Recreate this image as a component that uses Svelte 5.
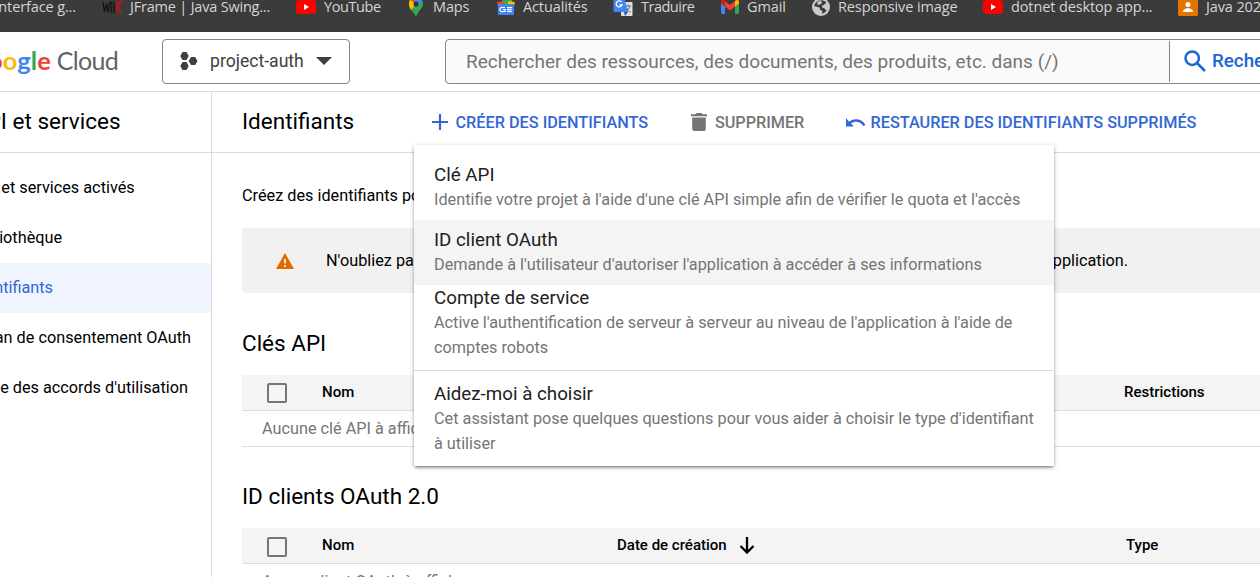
<script>
  const nav = [
    'API et services activés',
    'Bibliothèque',
    'Identifiants',
    'Écran de consentement OAuth',
    "Page des accords d'utilisation"
  ];
  const menu = [
    { title: 'Clé API', desc: ["Identifie votre projet à l'aide d'une clé API simple afin de vérifier le quota et l'accès"] },
    { title: 'ID client OAuth', desc: ["Demande à l'utilisateur d'autoriser l'application à accéder à ses informations"], kind: 'hover' },
    { title: 'Compte de service', desc: ["Active l'authentification de serveur à serveur au niveau de l'application à l'aide de", 'comptes robots'], kind: 'tight' },
    { title: 'Aidez-moi à choisir', desc: ["Cet assistant pose quelques questions pour vous aider à choisir le type d'identifiant", 'à utiliser'], kind: 'last' }
  ];
</script>

<div class="page">
  <nav class="bookmarks">
    <div class="bm b0"><span>Interface g...</span></div>
    <div class="bm b1">
      <svg width="20" height="16" viewBox="0 0 20 16"><path d="M.8 2.500 2.500 13 4.500 5 6.200 13 8 2.500M9.500 2.500v11M12 2.500v11h2" fill="none" stroke="#171717" stroke-width="1.500"/><path d="M14 2l5 12M19 1l-5 13" stroke="#c80f13" stroke-width="1.800"/></svg>
      <span>JFrame | Java Swing...</span>
    </div>
    <div class="bm b2">
      <svg width="20" height="16" viewBox="0 0 20 16"><rect y="1" width="20" height="14" rx="3.500" fill="#f00"/><path d="M8 5v6l5-3z" fill="#fff"/></svg>
      <span>YouTube</span>
    </div>
    <div class="bm b3">
      <svg width="14" height="20" viewBox="0 0 14 20"><path d="M7 0a7 7 0 0 1 7 7c0 4-4.500 6-7 13-1-4-7-8-7-13a7 7 0 0 1 7-7z" fill="#34a853"/><path d="M1.500 2.500 7 7l-5 6C.8 11 0 9 0 7c0-2 .6-3.500 1.500-4.500z" fill="#fbbc04"/><path d="M1.500 2.500A7 7 0 0 1 9 .3L4.500 5.500z" fill="#ea4335"/><path d="M9 .3a7 7 0 0 1 4.300 3.600L9 8 5 5z" fill="#4285f4"/><circle cx="7" cy="7" r="2.500" fill="#28344a"/></svg>
      <span>Maps</span>
    </div>
    <div class="bm b4">
      <svg width="18" height="18" viewBox="0 0 18 18"><path d="M5 0h10v9H5z" fill="#34a853"/><path d="M0 4 7 3v8L2 12z" fill="#ea4335"/><path d="m11 3 7 1-2 9-5-1z" fill="#fbbc04"/><rect x="1" y="6" width="16" height="11" rx="1" fill="#4285f4"/><path d="M8 9.500H6a2.200 2.200 0 1 0 0 4h2v-2H6M10 9.700h5M10 11.600h4.500M10 13.500h5" fill="none" stroke="#fff" stroke-width="1.200"/></svg>
      <span>Actualités</span>
    </div>
    <div class="bm b5">
      <svg width="20" height="20" viewBox="0 0 20 20"><rect x="8" y="5" width="11.500" height="14" rx="1" fill="#dce1e8"/><path d="M2 0h9l4 15H2a1.500 1.500 0 0 1-1.500-1.500V1z" fill="#4285f4"/><path d="m11 15 4 0-3 4z" fill="#2854b8"/><path d="M8.500 5A3 3 0 1 0 9 8H6.500" fill="none" stroke="#fff" stroke-width="1.300"/><path d="M12.500 9H18M15.200 7.500V9M17 9c-.7 3-2 4.500-4 5.500M13.500 11c1 2 2 3 4 4" fill="none" stroke="#687785" stroke-width="1.100"/></svg>
      <span>Traduire</span>
    </div>
    <div class="bm b6">
      <svg width="18" height="14" viewBox="0 0 18 14"><path d="M0 3h4v11H1.500A1.500 1.500 0 0 1 0 12.500z" fill="#4285f4"/><path d="M14 3h4v9.500a1.500 1.500 0 0 1-1.500 1.500H14z" fill="#34a853"/><path d="M0 2c0-2 2-2.500 3.500-1.300L9 5l5.500-4.300C16 0 18 0 18 2v1.500l-9 7-9-7z" fill="#ea4335"/><path d="M14 1c2-1.600 4-1 4 1v1.500l-4 3z" fill="#fbbc04"/><path d="M0 2c0-2 2-2.600 4-1v5.500l-4-3z" fill="#c5221f"/></svg>
      <span>Gmail</span>
    </div>
    <div class="bm b7">
      <svg width="18" height="18" viewBox="0 0 18 18"><circle cx="9" cy="9" r="9" fill="#c8cbce"/><path d="M9 2.200c2 0 4 .8 5.200 2.300L12.500 7 10 7.500V9.500L12 10l2.500 2.500c-1 1.700-2.500 2.800-4.500 3.200l.5-2.200L8 11.500 7.500 9.500 2.200 8C2.500 5 5 2.500 9 2.200z" fill="#3c3c3c"/><path d="M5 4.500 8 2.500l2 1.500-1 2-3 1zM12 6l3 1 .5 3-2-.5z" fill="#c8cbce"/></svg>
      <span>Responsive image</span>
    </div>
    <div class="bm b8">
      <svg width="20" height="16" viewBox="0 0 20 16"><rect y="1" width="20" height="14" rx="3.500" fill="#f00"/><path d="M8 5v6l5-3z" fill="#fff"/></svg>
      <span>dotnet desktop app...</span>
    </div>
    <div class="bm b9">
      <svg width="20" height="18" viewBox="0 0 20 18"><rect width="20" height="18" rx="1.500" fill="#e37400"/><circle cx="10" cy="6.500" r="2.500" fill="#fff"/><path d="M5 14c0-5 10-5 10 0z" fill="#fff"/></svg>
      <span>Java 2023</span>
    </div>
  </nav>

  <header class="top">
    <div class="logo"><span class="goog"><b class="blue">G</b><b class="red">o</b><b class="yellow">o</b><b class="blue">g</b><b class="green">l</b><b class="red">e</b></span><span class="cloud">Cloud</span></div>
    <div class="project">
      <svg width="18" height="20" viewBox="0 0 18 20" fill="#3c4043"><path d="M2.500 1h4L8.700 5 6.500 9h-4L.3 5zM2.500 11h4l2.200 4-2.200 4h-4L.3 15zM11 6h4.200l2.300 4-2.300 4H11l-2.300-4z"/></svg>
      <span>project-auth</span>
      <svg class="caret" width="16" height="8" viewBox="0 0 16 8"><path d="M0 0h16L8 8z" fill="#3c4043"/></svg>
    </div>
    <div class="search">
      <div class="field">Rechercher des ressources, des documents, des produits, etc. dans (/)</div>
      <div class="go">
        <svg width="22" height="22" viewBox="0 0 22 22" fill="none" stroke="#1967d2" stroke-width="2.500"><circle cx="8.200" cy="8.200" r="6.700"/><path d="m13 13 8 8"/></svg>
        <span>Recherche</span>
      </div>
    </div>
  </header>

  <div class="body">
    <aside>
      <div class="side-title">API et services</div>
      <div class="links">
        {#each nav as label, i}
          <div class="link" class:active={i === 2}>{label}</div>
        {/each}
      </div>
    </aside>

    <main>
      <div class="toolbar">
        <h1>Identifiants</h1>
        <div class="action create">
          <svg width="16" height="16" viewBox="0 0 16 16"><path d="M8 0v16M0 8h16" stroke="#3367d6" stroke-width="2.200"/></svg>
          <span>CRÉER DES IDENTIFIANTS</span>
        </div>
        <div class="action delete">
          <svg width="16" height="18" viewBox="0 0 16 18" fill="#757575"><path d="M0 1.200h4.500L5.300 0h5.400l.8 1.200H16v2H0zM1.200 4.500h13.600V16a2 2 0 0 1-2 2H3.200a2 2 0 0 1-2-2z"/></svg>
          <span>SUPPRIMER</span>
        </div>
        <div class="action restore">
          <svg width="20" height="9" viewBox="0 0 20 9"><path d="M0 0v8.500h8L5 5.500c4-3 9-2.500 12.500 2.500L19.500 7C15.500.3 8 0 3.200 3.700z" fill="#3367d6"/></svg>
          <span>RESTAURER DES IDENTIFIANTS SUPPRIMÉS</span>
        </div>

        <div class="menu">
          {#each menu as item}
            <div class="item {item.kind ?? ''}">
              <div class="name">{item.title}</div>
              {#each item.desc as line}<div class="desc">{line}</div>{/each}
            </div>
          {/each}
        </div>
      </div>

      <div class="content">
        <p class="intro">Créez des identifiants pour</p>
        <div class="banner">
          <svg width="18" height="16" viewBox="0 0 18 16"><path d="M9 0l9 16H0z" fill="#e06c00"/><path d="M9 6v4.500M9 12v2" stroke="#f1f1f1" stroke-width="1.800"/></svg>
          <span class="start">N'oubliez pas</span>
          <span class="end">application.</span>
        </div>

        <h2>Clés API</h2>
        <div class="thead"><i class="check"></i><b class="nom">Nom</b><b class="restr">Restrictions</b></div>
        <div class="row">Aucune clé API à afficher</div>

        <h2 class="second">ID clients OAuth 2.0</h2>
        <div class="thead"><i class="check low"></i><b class="nom">Nom</b><b class="date">Date de création</b>
          <svg class="arrow" width="16" height="18" viewBox="0 0 16 18"><path d="M8 0v16M1.500 9 8 15.500 14.500 9" fill="none" stroke="#000" stroke-width="2.300"/></svg>
          <b class="type">Type</b></div>
        <div class="row">Aucun client OAuth à afficher</div>
      </div>
    </main>
  </div>
</div>

<style>
  :global(body) { margin: 0; overflow: hidden; background: #fff; }
  .page { width: 1260px; height: 577px; overflow: hidden; font-family: Roboto, sans-serif; font-size: 16.25px; color: #000; white-space: nowrap; display: flex; flex-direction: column; }
  svg { display: block; flex: none; }

  .bookmarks { height: 32px; flex: none; background: #3b3b3b; display: flex; align-items: flex-start; overflow: hidden; font-family: "Open Sans", sans-serif; font-size: 14.500px; letter-spacing: -.12px; color: #d5d5d5; }
  .bm { display: flex; align-items: center; height: 14px; flex: none; gap: 8px; }
  .bm span { line-height: 14px; }
  .b0 { width: 102px; justify-content: flex-end; box-sizing: border-box; padding-right: 26px; }
  .b1 { width: 194px; }
  .b1 span { letter-spacing: -.2px; }
  .b2 { width: 113px; }
  .b2 span { letter-spacing: -.4px; }
  .b3 { width: 88px; gap: 10px; }
  .b4 { width: 116px; }
  .b5 { width: 108px; }
  .b5 span { letter-spacing: -.5px; }
  .b6 { width: 91px; }
  .b7 { width: 171px; }
  .b7 span { letter-spacing: -.12px; }
  .b8 { width: 195px; }
  .b9 { width: 90px; }

  .top { height: 59px; flex: none; border-bottom: 1px solid #dadce0; display: flex; align-items: center; }
  .logo { width: 118px; margin-right: 1px; flex: none; display: flex; justify-content: flex-end; font-family: Lato, sans-serif; font-size: 25px; line-height: 30px; margin-top: -3px; }
  .goog { display: flex; margin-right: 6px; font-size: 25.500px; }
  .goog b { font-weight: 700; }
  .blue { color: #4285f4; } .red { color: #ea4335; } .yellow { color: #fbbc04; } .green { color: #34a853; }
  .cloud { color: #5f6368; letter-spacing: -.7px; }
  .project { margin-left: 43px; margin-top: -1px; width: 188px; height: 45px; box-sizing: border-box; border: 1px solid #80868b; border-radius: 4px; display: flex; align-items: center; padding-left: 17px; font-size: 17.600px; color: #3c4043; flex: none; }
  .project span { width: 94px; margin-left: 12px; }
  .caret { margin-left: 12px; }
  .search { margin-left: 95px; margin-top: -1px; width: 900px; height: 45px; box-sizing: border-box; border: 1px solid #80868b; border-radius: 4px; display: flex; align-items: center; flex: none; background: linear-gradient(90deg, #fafafa 723px, #fff 723px); }
  .field { width: 703px; height: 41px; line-height: 41px; padding-left: 20px; border-right: 1px solid #80868b; color: #757575; font-size: 19px; }
  .go { display: flex; align-items: center; padding-left: 14px; gap: 6px; color: #1967d2; font-size: 18.750px; font-weight: 500; }

  .body { flex: 1; display: flex; min-height: 0; }
  aside { width: 211px; flex: none; border-right: 1px solid #dadce0; overflow: hidden; }
  .side-title { height: 60px; line-height: 59px; border-bottom: 1px solid #dadce0; font-size: 22.500px; text-indent: -28px; }
  .links { padding-top: 10px; }
  .link { height: 50px; line-height: 49px; text-indent: -28px; }
  .link.active { background: #eff4fe; color: #3367d6; }

  main { flex: 1; min-width: 0; }
  .toolbar { position: relative; height: 60px; border-bottom: 1px solid #dadce0; display: flex; align-items: center; padding-left: 30px; }
  h1, h2 { margin: 0; font-weight: 400; font-size: 22.500px; }
  h1 { width: 190px; line-height: 59px; height: 60px; flex: none; }
  .action { display: flex; align-items: center; gap: 8px; color: #3367d6; font-weight: 500; flex: none; }
  .create { width: 259px; gap: 7.500px; }
  .delete { width: 154.500px; color: #757575; letter-spacing: -.05px; }
  .restore { gap: 5px; }

  .menu { position: absolute; z-index: 2; left: 202px; top: 53px; width: 640px; height: 321px; box-sizing: border-box; padding-top: 10px; background: #fff; box-shadow: 0 2px 3px -1px rgba(0, 0, 0, .5), 0 1px 5px rgba(0, 0, 0, .2); }
  .item { padding: 7px 20px 8px; line-height: 25px; }
  .item.hover { background: #f4f4f4; }
  .item.tight { padding: 0 20px 10px; border-bottom: 1px solid #dadce0; }
  .item.last { padding: 10px 20px; }
  .name { font-size: 18.750px; color: #212121; height: 24px; padding-top: 1px; line-height: 25px; }
  .desc { color: #757575; }

  .content { padding-left: 30px; }
  .intro { margin: 0; padding-top: 30px; height: 45px; line-height: 25px; }
  .banner { height: 65px; background: #f1f1f1; border-radius: 4px 0 0 4px; display: flex; align-items: center; padding-left: 34px; }
  .banner .start { width: 260px; margin-left: 32px; }
  .banner .end { margin-left: 458px; }
  h2 { padding-top: 20px; height: 62px; line-height: 60px; }
  h2.second { padding-top: 19px; }
  .thead { height: 35px; background: #f4f4f4; border-bottom: 1px solid #dadce0; display: flex; align-items: center; font-size: 15px; }
  .thead b { font-weight: 500; flex: none; padding-bottom: 2px; }
  .check { width: 16px; height: 16px; flex: none; border: 2px solid #757575; border-radius: 2px; margin-left: 25px; }
  .check.low { margin-top: 2px; }
  .nom { margin-left: 35px; width: 295px; }
  .restr { margin-left: 507px; }
  .date { width: 122px; }
  .arrow { width: 16px; }
  .type { margin-left: 371px; }
  .row { height: 35px; line-height: 35px; border-bottom: 1px solid #dadce0; padding-left: 20px; color: #757575; }
</style>
